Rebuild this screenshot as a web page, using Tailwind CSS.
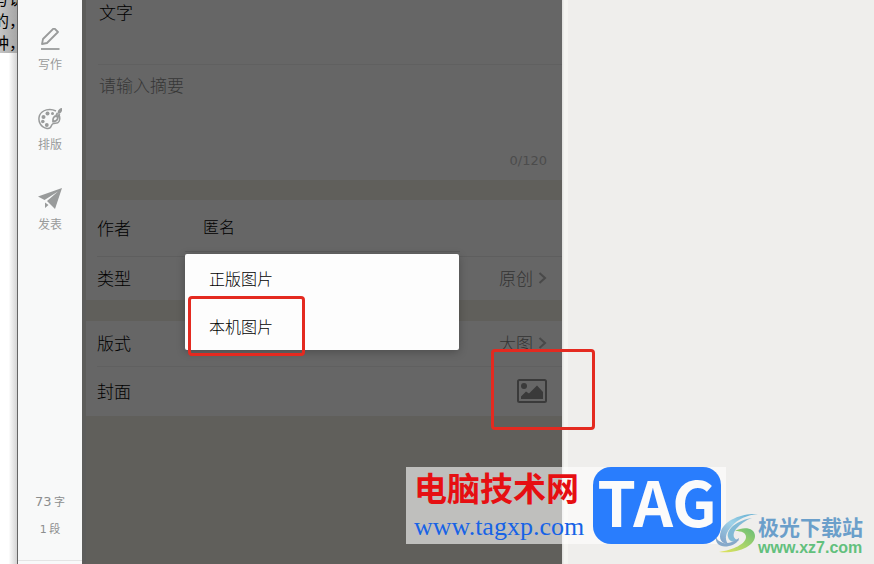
<!DOCTYPE html>
<html lang="zh-CN">
<head>
    <meta charset="UTF-8">
    <meta name="viewport" content="width=device-width, initial-scale=1.0">
    <title>封面图片</title>
    <script src="https://cdn.jsdelivr.net/npm/@tailwindcss/browser@4"></script>
</head>
<body class="relative flex h-screen overflow-hidden bg-[#efeeec] font-['Noto_Sans_CJK_SC',sans-serif] text-black">
    <!-- Window behind -->
    <div class="w-[18px] shrink-0 overflow-hidden border-r border-[#666] bg-linear-to-r from-white from-50% to-[#d4d4d4]">
        <div class="flex h-[53px] flex-col items-end justify-end bg-linear-to-r from-[#c4c4c4] to-[#a6a6a6] text-base leading-[22px] whitespace-nowrap">
            <p class="-mr-2">写说</p>
            <p class="-mr-2">的，</p>
            <p class="-mr-2">种，</p>
        </div>
    </div>

    <!-- Sidebar -->
    <aside class="flex w-16 shrink-0 flex-col justify-between bg-[#f8f9f9] text-[#999b9b]">
        <nav class="flex flex-col gap-6 pt-6 text-xs leading-5">
            <button class="flex h-14 flex-col items-center justify-between pt-1 pb-1.5">
                <svg class="size-6" viewBox="0 0 24 24" fill="none" stroke="currentColor" stroke-width="1.800" stroke-linejoin="round"><path d="M4 16l1-5L16 0l4 4L9 15z"/><path d="M3 21h18.500"/></svg>
                <span>写作</span>
            </button>
            <button class="flex h-14 flex-col items-center justify-between pt-1 pb-1.5">
                <svg class="size-6" viewBox="0 0 24 24" fill="none" stroke="currentColor" stroke-width="1.500">
                    <path d="M18 3C12 0 4 1.500 1.500 7.500c-2 6 1.500 12 7.500 13 5 .8 3.500-3 5.500-4.500 2-1.500 5 .5 6.500-2.500 1-2 1-4.500-.2-6.500"/>
                    <g fill="currentColor" stroke="none"><circle cx="9.500" cy="5.500" r="2"/><circle cx="14.500" cy="5.500" r="1.500"/><circle cx="5.500" cy="9" r="2"/><circle cx="4.800" cy="13.500" r="1.800"/><circle cx="8.800" cy="17" r="1.900"/><path d="M19.500 4.500C20 1.500 22 0 24 0c.8 2-.5 5-3.200 6z"/></g>
                    <path d="M19.500 5l-2 4M21.500 6l-2 4M15 13.500c-.5-3 1-5.500 3.200-5.500 2.800.5 2 5.500-3.200 5.500z" stroke-width="1.800"/>
                </svg>
                <span>排版</span>
            </button>
            <button class="flex h-14 flex-col items-center justify-between pt-1 pb-1.5">
                <svg class="size-6" viewBox="0 0 24 24" fill="currentColor"><path d="M24 0L0 8.500l6.500 3.500L20 3.500 9 13l8 8zM7 14.500V20l3.500-3z"/></svg>
                <span>发表</span>
            </button>
        </nav>
        <div class="text-center text-[#8c8e8e]">
            <p class="text-[11px] leading-6"><span class="font-['DejaVu_Sans'] text-[13px]">73</span> 字</p>
            <p class="pb-4 text-[11px] leading-7"><span class="font-['DejaVu_Sans']">1</span> 段</p>
            <div class="h-1 border-t border-[#e4e4e4]"></div>
        </div>
    </aside>

    <!-- Article settings, dimmed by the open menu -->
    <form class="flex w-[480px] shrink-0 flex-col border-l-4 border-[#5d5d5b] bg-[#605f5b]">
        <section class="bg-[#666]">
            <label class="sr-only" for="title">标题</label>
            <textarea id="title" class="block h-16 w-full resize-none px-[13px] text-[17px] leading-6 font-light outline-none">文字</textarea>
            <label class="sr-only" for="summary">摘要</label>
            <div class="ml-3 border-t border-[#606060]"></div>
            <textarea id="summary" class="block h-[84px] w-full resize-none px-[13px] pt-2 text-[17px] leading-6 font-light outline-none placeholder:text-[#363636]" placeholder="请输入摘要"></textarea>
            <p class="h-[31px] pt-1 pr-[15px] text-right font-['DejaVu_Sans'] text-[13px] leading-4 text-[#4c4c4c]">0/120</p>
        </section>

        <section class="mt-5 bg-[#666] pl-[11px] text-[17px] font-light">
            <div class="flex h-14 items-center">
                <label class="w-[88px]" for="author">作者</label>
                <input id="author" class="h-12 min-w-0 flex-1 border-b border-[#5b5b5b] px-[18px] pt-1 pb-2 text-base outline-none" value="匿名">
                <span class="w-[102px]"></span>
            </div>
            <div class="flex h-11 items-center justify-between border-t border-[#5e5e5e] pr-[15px] pb-0.5">
                <span>类型</span>
                <button type="button" class="flex items-center gap-1 text-[#333]">原创
                    <svg class="h-3 w-2.5" viewBox="0 0 10 12" fill="none" stroke="#494949" stroke-width="2"><path d="M2.500 1l5.500 5-5.500 5"/></svg>
                </button>
            </div>
        </section>

        <section class="mt-[21px] bg-[#666] pl-[11px] text-[17px] font-light">
            <div class="flex h-[45px] items-center justify-between pr-[15px] pb-0.5">
                <span>版式</span>
                <button type="button" class="flex items-center gap-1 text-[#333]">大图
                    <svg class="h-3 w-2.5" viewBox="0 0 10 12" fill="none" stroke="#494949" stroke-width="2"><path d="M2.500 1l5.500 5-5.500 5"/></svg>
                </button>
            </div>
            <div class="flex h-[50px] items-center justify-between border-t border-[#606060] pr-[15px] pb-0.5">
                <span>封面</span>
                <button type="button" aria-label="选择封面">
                    <svg class="h-6 w-[30px]" viewBox="0 0 30 24"><rect x="1" y="1" width="28" height="22" rx="1.500" fill="none" stroke="#3a3a3a" stroke-width="2"/><circle cx="7" cy="7" r="3" fill="#3a3a3a"/><path d="M4 20v-2.500l5-5 3 2 8-8 6 6.500v7z" fill="#3a3a3a"/></svg>
                </button>
            </div>
        </section>
    </form>
    <div class="w-1.5 bg-linear-to-r from-[#dededc] to-[#f4f4f1] to-40%"></div>

    <!-- Picture source menu -->
    <div class="absolute top-[254px] left-[185px] flex w-[274px] flex-col rounded-xs bg-[#fdfdfd] text-base font-light shadow-[0_2px_8px_#00000040]">
        <button class="h-12 px-6 text-left">正版图片</button>
        <button class="h-12 px-6 text-left">本机图片</button>
    </div>

    <!-- Highlights -->
    <div class="absolute top-[296px] left-[188px] h-[60px] w-[117px] rounded-sm border-3 border-[#e42a20]"></div>
    <div class="absolute top-[349px] left-[491px] h-[81px] w-[104px] rounded-sm border-3 border-[#e42a20]"></div>

    <!-- Watermarks -->
    <div class="absolute top-[467px] left-[406px] flex h-[77px] w-80 justify-between bg-white/60 pr-[5px] pl-2">
        <div class="whitespace-nowrap">
            <p class="text-[33px] leading-10 font-bold text-[#e60f12]">电脑技术网</p>
            <p class="pt-0.5 font-['Liberation_Serif'] text-[26px] leading-9 text-[#1763e6]">www.tagxp.com</p>
        </div>
        <div class="flex w-32 items-center justify-center rounded-[18px] bg-[#297dfd] pb-3 text-[62px] leading-none font-bold text-[#fbfbfb]">TAG</div>
    </div>
    <div class="absolute top-[512px] left-[714px] flex items-start">
        <svg class="h-11 w-11" viewBox="0 0 44 44">
            <defs>
                <linearGradient id="blue" x1="1" y1="0" x2="0" y2="1"><stop offset="0" stop-color="#5aa9cf"/><stop offset=".5" stop-color="#9fd2e8"/><stop offset="1" stop-color="#7f9fc6"/></linearGradient>
                <linearGradient id="green" x1="0" y1="1" x2="1" y2="0"><stop offset="0" stop-color="#e5e45c"/><stop offset=".5" stop-color="#a6d36a"/><stop offset="1" stop-color="#67bd78"/></linearGradient>
            </defs>
            <path d="M44 2C30 1 11 7 7 19c-3 8 1 13 7 13-4-6-2-12 4-18C24 7 33 3 44 2z" fill="url(#blue)"/>
            <path d="M38 6C24 8 12 17 14 25c1 5 7 6 11 3-6 0-7-6-3-11 4-5 10-9 16-11z" fill="#82bad6"/>
            <path d="M2 25c-1 7 5 11 13 9 6-1 10-5 10-8-5 4-13 7-18 4-3-1-4-3-5-5z" fill="#86a8c9"/>
            <path d="M21 19c9-5 20-3 20 5 0 10-17 18-36 16 14-2 27-8 27-15 0-4-4-6-11-6z" fill="url(#green)"/>
        </svg>
        <div class="whitespace-nowrap">
            <p class="text-[21px] leading-7 font-bold text-[#6b9fca]">极光下载站</p>
            <p class="font-['Liberation_Sans'] text-base leading-4 font-bold text-[#62c07c]">www.xz7.com</p>
        </div>
    </div>
</body>
</html>
